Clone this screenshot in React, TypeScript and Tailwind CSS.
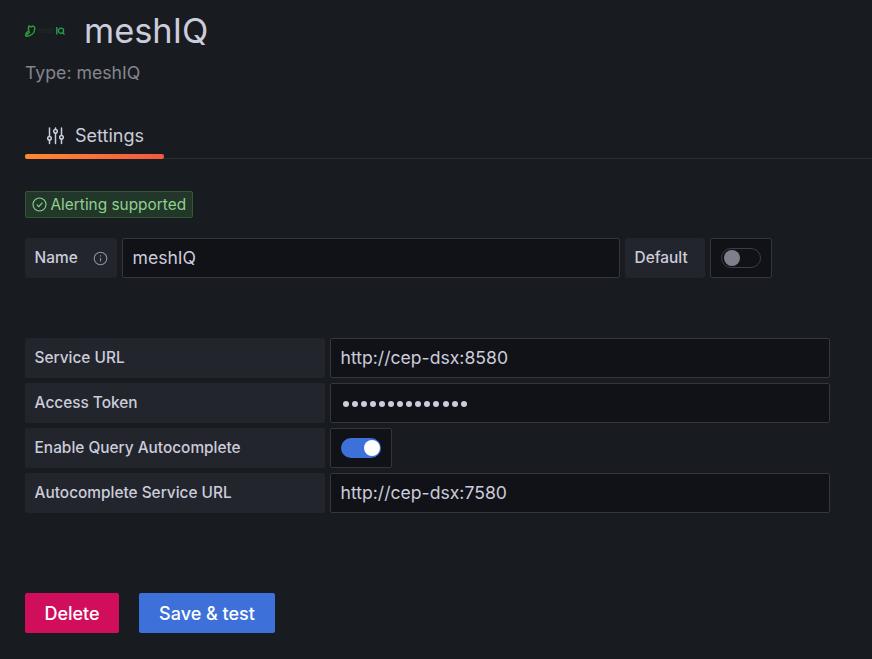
const font = { fontFamily: "Inter, sans-serif" };

function Label({ children, w }: { children: React.ReactNode; w: string }) {
  return (
    <div className={`${w} h-10 shrink-0 flex items-center justify-between pl-[9.6px] pr-[10px] pb-[1px] rounded-[2px] bg-[#22252b] text-[15.4px] font-medium text-[#ccccdc]`}>
      {children}
    </div>
  );
}

function Field({ value, w }: { value: string; w: string }) {
  return (
    <div className={`${w} h-10 flex items-center pl-[9.5px] rounded-[2px] border border-[#34363b] bg-[#111217] text-[17.6px] text-[#ccccdc]`}>
      {value}
    </div>
  );
}

function Toggle({ on }: { on: boolean }) {
  return (
    <div className="w-[62px] h-10 flex items-center justify-center rounded-[2px] border border-[#34363b] bg-[#111217]">
      {on ? (
        <div className="w-10 h-5 rounded-full bg-[#3d71d9] flex items-center justify-end pr-[1px]">
          <div className="w-4 h-4 rounded-full bg-white" />
        </div>
      ) : (
        <div className="w-10 h-5 rounded-full border border-[#3b3d44] flex items-center pl-[2px]">
          <div className="w-4 h-4 rounded-full bg-[#7e7f8c]" />
        </div>
      )}
    </div>
  );
}

export default function App() {
  return (
    <div className="w-[872px] h-[659px] overflow-hidden bg-[#181b1f] pl-[25px]" style={font}>
      <div className="flex items-center h-[62px]">
        <div className="w-[60px] flex items-center">
          <svg width="11" height="12" viewBox="0 0 11 12">
            <path d="M0.8 11 C0.5 9 2 7 4 6 C3 4 3.5 2 4 1 L6 2 L8 1 L9.5 2 C10 5 10 7 7.5 9 C5.5 10.5 3 11.5 0.8 11 Z" fill="none" stroke="#2a9a3a" strokeWidth="1.5" />
            <path d="M1 10.5 L5 7" stroke="#2a9a3a" strokeWidth="1.2" />
          </svg>
          <span className="w-[20px] text-center text-[6px] leading-none text-[#1d3524]">mesh</span>
          <svg width="9" height="8" viewBox="0 0 9 8" className="mb-[1px]">
            <path d="M0.8 0 V7.5" stroke="#22a04a" strokeWidth="1.4" />
            <circle cx="5" cy="3.8" r="2.6" fill="none" stroke="#22a04a" strokeWidth="1.3" />
            <path d="M6 5 L8.5 7.5" stroke="#22a04a" strokeWidth="1.3" />
          </svg>
        </div>
        <h1 className="text-[34.4px] leading-none text-[#ccccdc] -ml-[1px]">meshIQ</h1>
      </div>
      <div className="h-[22px] flex items-center text-[17.7px] text-[#85868f]">Type: meshIQ</div>

      <div className="mt-[32px] h-[43px] border-b border-[#2b2d32] flex">
        <div className="relative w-[139px] h-[43px] flex items-center pl-[21px] pb-[5px] gap-[10px] text-[18px] text-[#ccccdc]">
          <svg width="19" height="19" viewBox="0 0 19 19" fill="none" stroke="#ccccdc" strokeWidth="1.5" strokeLinecap="round">
            <path d="M3.5 2 V10 M3.5 14.5 V17.5 M9.5 2 V3 M9.5 7.5 V17.5 M15.5 2 V9 M15.5 13.5 V17.5" />
            <circle cx="3.5" cy="12.2" r="1.8" />
            <circle cx="9.5" cy="5.2" r="1.8" />
            <circle cx="15.5" cy="11.2" r="1.8" />
          </svg>
          <span>Settings</span>
          <div className="absolute left-0 right-0 bottom-0 h-[5px] rounded-[2px] bg-gradient-to-r from-[#ff8833] to-[#f0593f]" />
        </div>
      </div>

      <div className="mt-8 w-[168px] h-[27px] flex items-center gap-[3.5px] pl-[6px] rounded-[2px] border border-[#2f5a2f] bg-[#23362a] text-[15.4px] text-[#8fd18f]">
        <svg width="15" height="15" viewBox="0 0 15 15" fill="none" stroke="#8fd18f" strokeWidth="1.1">
          <circle cx="7.5" cy="7.5" r="6.5" />
          <path d="M4.8 7.7 L6.8 9.7 L10.4 5.6" />
        </svg>
        Alerting supported
      </div>

      <div className="mt-5 flex gap-[5px]">
        <Label w="w-[92px]">
          Name
          <svg width="15" height="15" viewBox="0 0 15 15" fill="none" stroke="#8e8f99" strokeWidth="1.1" className="mt-[1px] -mr-[0.5px]">
            <circle cx="7.5" cy="7.5" r="6.3" />
            <path d="M7.5 7 V10.6 M7.5 4.3 V5.4" />
          </svg>
        </Label>
        <Field value="meshIQ" w="w-[498px]" />
        <Label w="w-[80px]">Default</Label>
        <Toggle on={false} />
      </div>

      <div className="mt-[60px] flex flex-col gap-[5px]">
        <div className="flex gap-[5px]">
          <Label w="w-[300px]">Service URL</Label>
          <Field value="http://cep-dsx:8580" w="w-[500px]" />
        </div>
        <div className="flex gap-[5px]">
          <Label w="w-[300px]">Access Token</Label>
          <div className="w-[500px] h-10 flex items-center gap-[3.1px] pl-[11.5px] pt-[2px] rounded-[2px] border border-[#34363b] bg-[#111217]">
            {Array.from({ length: 14 }).map((_, i) => (
              <span key={i} className="w-[6px] h-[6px] rounded-full bg-[#ccccdc]" />
            ))}
          </div>
        </div>
        <div className="flex gap-[5px]">
          <Label w="w-[300px]">Enable Query Autocomplete</Label>
          <Toggle on />
        </div>
        <div className="flex gap-[5px]">
          <Label w="w-[300px]">Autocomplete Service URL</Label>
          <Field value="http://cep-dsx:7580" w="w-[500px]" />
        </div>
      </div>

      <div className="mt-20 flex gap-5">
        <button className="w-[94px] h-10 rounded-[2px] bg-[#d10e5c] text-[18px] font-medium text-white">Delete</button>
        <button className="w-[136px] h-10 rounded-[2px] bg-[#3d71d9] text-[18px] font-medium text-white">Save &amp; test</button>
      </div>
    </div>
  );
}
